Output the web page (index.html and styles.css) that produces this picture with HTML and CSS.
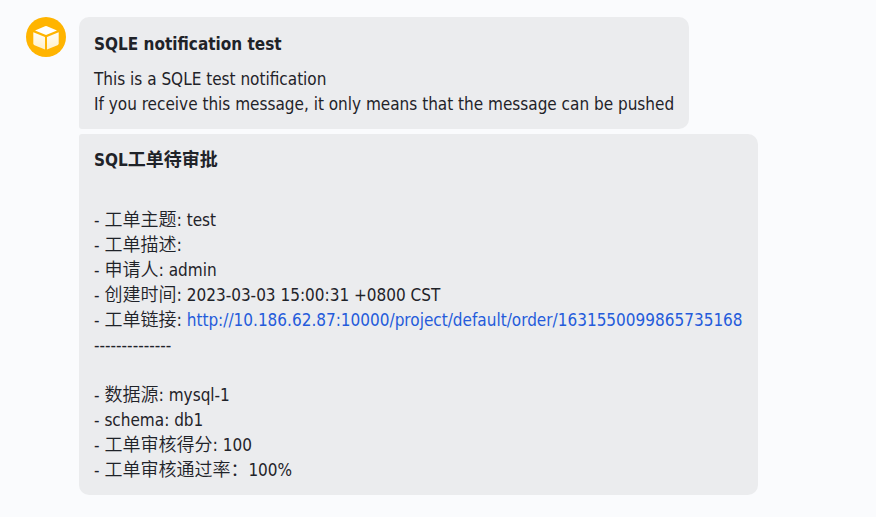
FILE: index.html
```html
<!DOCTYPE html>
<html lang="zh-CN">
<head>
<meta charset="utf-8">
<title>SQLE</title>
<link rel="stylesheet" href="styles.css">
</head>
<body>
<main class="chat">
  <svg class="avatar" viewBox="0 0 40 40" aria-hidden="true">
    <defs>
      <linearGradient id="face" x1="0" y1="0" x2="0" y2="1">
        <stop offset="0" stop-color="#fffdf8"/>
        <stop offset="1" stop-color="#fff0c8"/>
      </linearGradient>
    </defs>
    <circle cx="20" cy="20" r="20" fill="#ffb400"/>
    <path d="M19 9.200Q20 8.700 21 9.200L31 13.600 20 18 9 13.600Z" fill="#fff"/>
    <path d="M7.300 15.300 19 20V32.500L8.500 28.200Q7.300 27.600 7.300 26.300Z" fill="url(#face)"/>
    <path d="M32.700 15.300 21 20V32.500L31.500 28.200Q32.700 27.600 32.700 26.300Z" fill="url(#face)"/>
  </svg>
  <div class="messages">
    <article class="bubble bubble-first">
      <h2 class="title">SQLE notification test</h2>
      <p class="text">This is a SQLE test notification</p>
      <p class="text">If you receive this message, it only means that the message can be pushed</p>
    </article>
    <article class="bubble bubble-last">
      <h2 class="title title-spaced">SQL<span class="label">工单待审批</span></h2>
      <p class="text">- <span class="label">工单主题:</span> test</p>
      <p class="text">- <span class="label">工单描述:</span></p>
      <p class="text">- <span class="label">申请人:</span> admin</p>
      <p class="text">- <span class="label">创建时间:</span> 2023-03-03 15:00:31 +0800 CST</p>
      <p class="text">- <span class="label">工单链接:</span> <a class="link" href="http://10.186.62.87:10000/project/default/order/1631550099865735168">http://10.186.62.87:10000/project/default/order/1631550099865735168</a></p>
      <p class="text text-spaced">--------------</p>
      <p class="text">- <span class="label">数据源:</span> mysql-1</p>
      <p class="text">- schema: db1</p>
      <p class="text">- <span class="label">工单审核得分:</span> 100</p>
      <p class="text">- <span class="label">工单审核通过率：</span>100%</p>
    </article>
  </div>
</main>
</body>
</html>
```
FILE: styles.css
```css
body {
  margin: 0;
  background: #fafbfd;
  color: #1f2329;
  font-family: "DejaVu Sans Condensed", "Noto Sans CJK SC", sans-serif;
  font-size: 17px;
  font-weight: 350;
  line-height: 25px;
}
.chat {
  display: flex;
  align-items: flex-start;
  gap: 13px;
  padding: 17px 26px;
}
.avatar {
  flex: none;
  width: 40px;
  height: 40px;
}
.messages {
  display: flex;
  flex-direction: column;
  align-items: flex-start;
  gap: 5px;
}
.bubble {
  background: #ebecee;
}
.bubble-first {
  padding: 15px 15px 12px;
  border-radius: 10px 10px 10px 3px;
}
.bubble-last {
  padding: 14px 15px 12px;
  border-radius: 3px 10px 10px 10px;
}
.title {
  margin: 0 0 10px;
  font-size: 17px;
  font-weight: 700;
}
.title-spaced { margin-bottom: 35px; }
.text { margin: 0; }
.text-spaced { margin-bottom: 25px; }
.label {
  font-size: 18px;
  line-height: 1;
}
.link {
  color: #245bdb;
  text-decoration: none;
}
```
